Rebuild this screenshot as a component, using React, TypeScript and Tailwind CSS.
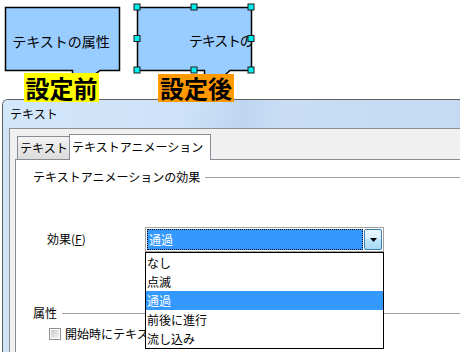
const items = ["なし", "点滅", "通過", "前後に進行", "流し込み"];
const selected = 2;

// selection handles around the second shape
const handles = [
  [137, 7],
  [194, 7],
  [251, 7],
  [137, 38.5],
  [251, 38.5],
  [137, 70],
  [194, 70],
  [251, 70],
];

function Slide() {
  return (
    <div className="relative h-[99px]">
      <svg className="absolute left-0 top-0" width={460} height={99}>
        <defs>
          <clipPath id="shape2">
            <rect x={138} y={8} width={113} height={62} />
          </clipPath>
        </defs>
        {/* before */}
        <path
          d="M5.5 7.5 H119.5 V70.5 H100 L72.5 91 V70.5 H5.5 Z"
          fill="#99ccff"
          stroke="#000"
          strokeWidth={1.5}
        />
        <text x={61} y={47} fontSize={14} textAnchor="middle" fill="#000">
          テキストの属性
        </text>
        {/* after */}
        <path
          d="M137.5 7.5 H251.5 V70.5 H230 L204.5 93 V70.5 H137.5 Z"
          fill="#99ccff"
          stroke="#000"
          strokeWidth={1.5}
        />
        <g clipPath="url(#shape2)">
          <text x={189} y={46} fontSize={14} letterSpacing={-1.2} fill="#000">
            テキストの属性
          </text>
        </g>
        {handles.map(([cx, cy], i) => (
          <rect
            key={i}
            x={cx - 3}
            y={cy - 3}
            width={6}
            height={6}
            fill="#00f0f0"
            stroke="#1a1a1a"
            strokeWidth={1}
          />
        ))}
      </svg>
      <div className="absolute left-[24px] top-[73px] z-10 h-[29px] w-[75px] bg-[#ffff00] text-center text-[24px] font-bold leading-[29px]">
        設定前
      </div>
      <div className="absolute left-[158px] top-[74px] z-10 h-[28px] w-[76px] bg-[#ff9900] text-center text-[24px] font-bold leading-[28px]">
        設定後
      </div>
    </div>
  );
}

function GroupTitle({ label }: { label: string }) {
  return (
    <div className="flex h-[14px] items-center gap-[5px] pl-[17px] leading-[14px]">
      <span className="whitespace-nowrap">{label}</span>
      <div className="h-px flex-1 bg-[#a0a0a0]" />
    </div>
  );
}

function Combo() {
  return (
    <div className="relative w-[239px]">
      <div className="flex h-[25px] border border-[#a0a0a0] bg-white p-[1px]">
        <div className="flex-1 border border-dotted border-black bg-[#3399ff] pl-[1px] leading-[20px] text-white">
          通過
        </div>
        <div className="ml-[1px] flex w-[18px] items-center justify-center rounded-[2px] border border-[#3c7fb1] bg-[linear-gradient(#eaf6fd_0%,#d9f0fc_45%,#bee6fd_50%,#a7d9f5_100%)]">
          <svg width={7} height={4} viewBox="0 0 7 4">
            <path d="M0 0 H7 L3.5 4 Z" fill="#000" />
          </svg>
        </div>
      </div>
      <div className="absolute left-0 top-full z-20 w-[239px] border border-black bg-white">
        {items.map((it, i) => (
          <div
            key={it}
            className={`h-[19px] pl-[1px] leading-[19px] ${
              i === selected ? "bg-[#3399ff] text-white" : ""
            }`}
          >
            {it}
          </div>
        ))}
      </div>
    </div>
  );
}

export default function App() {
  return (
    <div className="relative h-[352px] w-[460px] overflow-hidden bg-white font-['Noto_Sans_CJK_JP','Noto_Sans',sans-serif] text-[12px] text-black">
      <Slide />

      {/* dialog window */}
      <div className="ml-[2px] w-[480px] rounded-tl-[6px] border-l border-t border-[#5f5f5f] bg-[#cfe2f6]">
        <div className="h-[28px] rounded-tl-[5px] bg-[linear-gradient(100deg,#d3e7fb_0%,#cde2f8_38%,#bed6f0_50%,#c9def5_58%,#c3daf2_100%)] pl-[7px] leading-[28px]">
          テキスト
        </div>
        <div className="flex h-[230px]">
          <div className="w-[6px] bg-[#cfe2f6]" />
          <div className="flex flex-1 flex-col border-l border-t border-[#8e8e8e] bg-[#f0f0f0] pl-[5px]">
            {/* tabs */}
            <div className="flex h-[30px] items-end">
              <div className="ml-[2px] h-[23px] w-[52px] border-l border-t border-[#898c95] bg-[linear-gradient(#f3f3f3,#dcdcdc)] pl-[2px] leading-[22px]">
                テキスト
              </div>
              <div className="relative z-10 -mb-px h-[26px] w-[142px] border-x border-t border-[#898c95] bg-white pl-[2px] leading-[23px]">
                テキストアニメーション
              </div>
            </div>
            {/* panel */}
            <div className="flex-1 border-l border-t border-[#898c95] bg-white">
              <div className="mt-[10px]">
                <GroupTitle label="テキストアニメーションの効果" />
              </div>
              <div className="mt-[43px] flex h-[25px] pl-[31px]">
                <div className="w-[98px] pt-[5px] leading-[14px]">
                  効果(<span className="underline">F</span>)
                </div>
                <Combo />
              </div>
              <div className="mt-[54px]">
                <GroupTitle label="属性" />
              </div>
              <div className="mt-[7px] flex h-[14px] items-center pl-[33px]">
                <div className="flex h-[12px] w-[12px] items-center justify-center border border-[#8f8f8f] bg-white">
                  <div className="h-[8px] w-[8px] bg-[linear-gradient(135deg,#cbcbcb,#f4f4f4)]" />
                </div>
                {/* the open list covers the rest of this label */}
                <span className="ml-[4px] w-[80px] overflow-hidden whitespace-nowrap leading-[14px]">
                  開始時にテキストを表示しない
                </span>
              </div>
            </div>
          </div>
        </div>
      </div>
    </div>
  );
}
